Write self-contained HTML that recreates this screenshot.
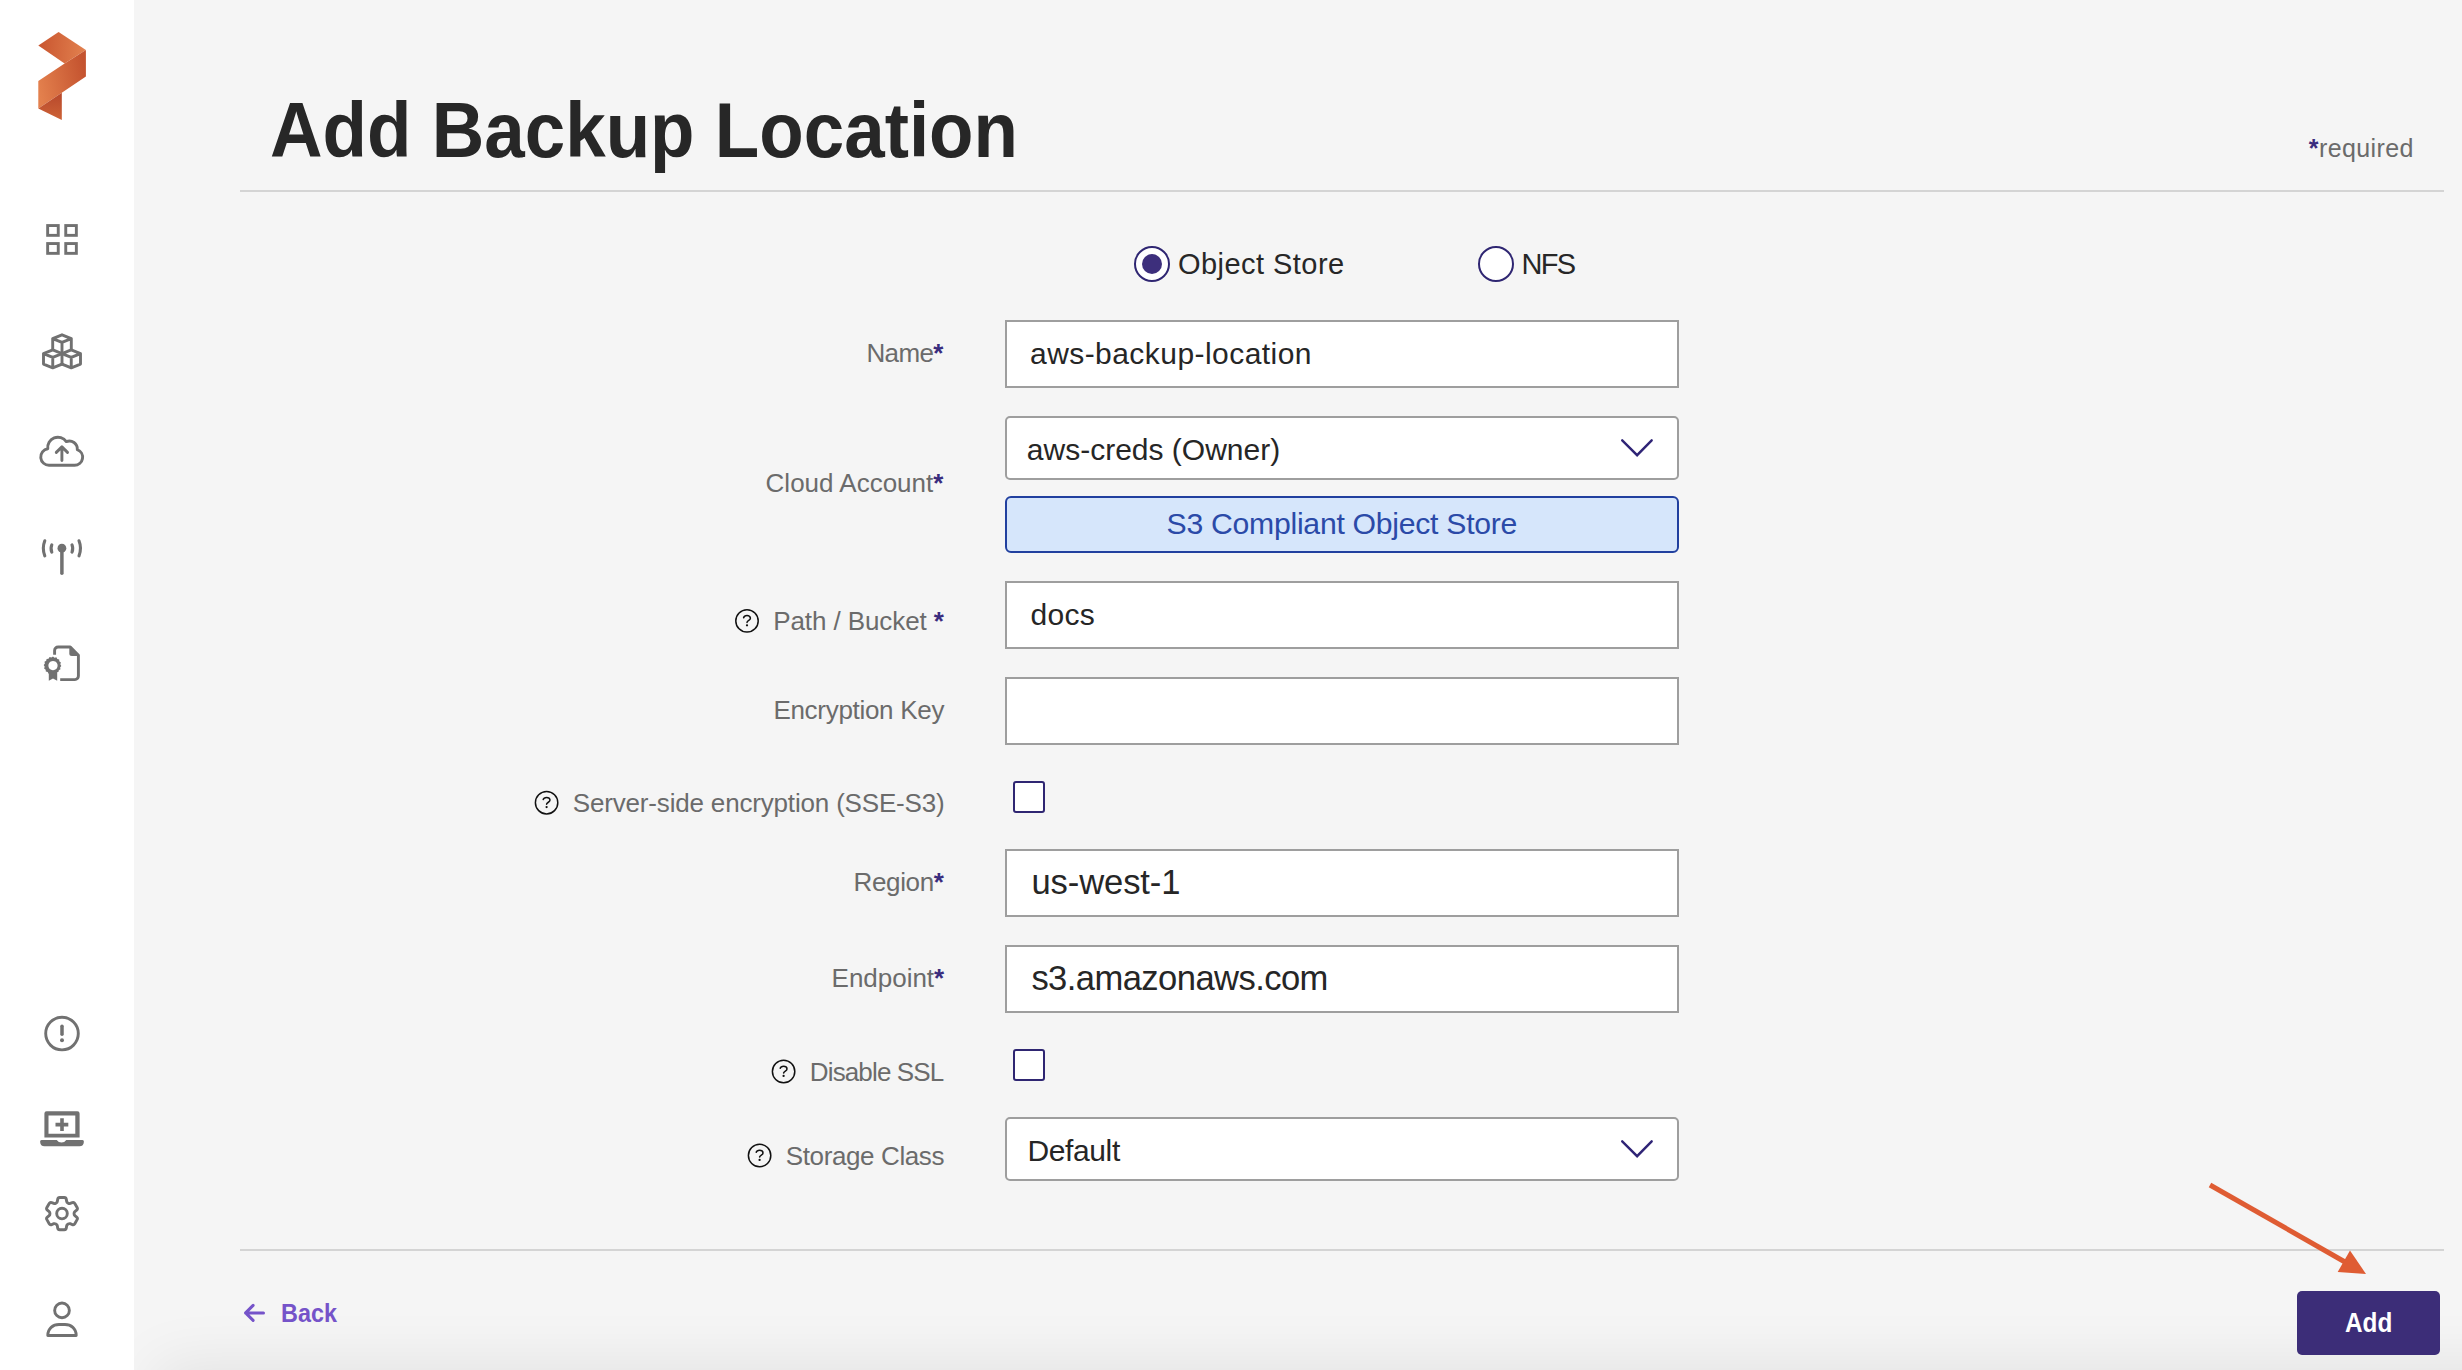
<!DOCTYPE html>
<html><head><meta charset="utf-8">
<style>
html,body{margin:0;padding:0;width:2462px;height:1370px;overflow:hidden;background:#f5f5f5;font-family:"Liberation Sans",sans-serif;}
.t{position:absolute;white-space:nowrap;}
.a{color:#3a2c7e;font-weight:700;}
.abs{position:absolute;box-sizing:border-box;}
#side{left:0;top:0;width:134px;height:1370px;background:#fff;}
.hr{position:absolute;left:240px;width:2204px;height:2px;background:#d4d4d4;}
.inp{position:absolute;left:1005px;width:674px;height:68px;background:#fff;border:2px solid #9e9e9e;box-sizing:border-box;}
.sel{position:absolute;left:1005px;width:674px;height:64px;background:#fff;border:2px solid #9e9e9e;border-radius:5px;box-sizing:border-box;}
.cb{position:absolute;left:1013px;width:32px;height:32px;background:#fff;border:2px solid #2f2672;border-radius:3px;box-sizing:border-box;}
svg{position:absolute;overflow:visible;}
</style></head><body>
<div class="abs" style="left:170px;top:1378px;width:2400px;height:60px;background:#ddd;box-shadow:0 0 60px 14px rgba(0,0,0,0.08)"></div>
<div id="side" class="abs"></div>
<!-- logo -->
<svg style="left:0;top:0" width="134" height="134" viewBox="0 0 134 134">
<defs>
<linearGradient id="g1" x1="38" y1="46" x2="86" y2="50" gradientUnits="userSpaceOnUse"><stop offset="0" stop-color="#c9552f"/><stop offset="1" stop-color="#e2814f"/></linearGradient>
<linearGradient id="g2" x1="38" y1="85" x2="86" y2="75" gradientUnits="userSpaceOnUse"><stop offset="0" stop-color="#e3804d"/><stop offset="1" stop-color="#c4532f"/></linearGradient>
<linearGradient id="g3" x1="50" y1="95" x2="50" y2="120" gradientUnits="userSpaceOnUse"><stop offset="0" stop-color="#b94a2c"/><stop offset="1" stop-color="#cd6337"/></linearGradient>
</defs>
<path d="M58.6 32 L85.9 50.1 L64.6 63.4 L38.3 45.5 Z" fill="url(#g1)"/>
<path d="M85.9 50.1 L85.9 76.6 L61.8 92.7 L38.3 108.4 L38.3 81 L64.6 63.4 Z" fill="url(#g2)"/>
<path d="M38.3 108.4 L61.8 92.7 L61.8 120 Z" fill="url(#g3)"/>
</svg>
<!-- sidebar icons -->
<svg style="left:0;top:0" width="134" height="1370" viewBox="0 0 134 1370" fill="none" stroke="#717171" stroke-width="2.9" stroke-linecap="round" stroke-linejoin="round">
<!-- grid -->
<g stroke-linecap="butt" stroke-linejoin="miter">
<rect x="47.65" y="225.55" width="10.6" height="9.8"/>
<rect x="65.75" y="225.55" width="10.6" height="9.8"/>
<rect x="47.65" y="243.55" width="10.6" height="9.8"/>
<rect x="65.75" y="243.55" width="10.6" height="9.8"/>
</g>
<!-- cubes -->
<path d="M62 334.8 L52.7 338.6 L62 342.4 L71.3 338.6 Z M52.7 338.6 V349.8 M71.3 338.6 V349.8 M62 342.4 V364.1"/>
<path d="M52.75 349.8 L43.5 353.6 L52.75 357.4 L62 353.6 Z M43.5 353.6 V364.1 L52.75 367.9 L62 364.1 M52.75 357.4 V367.9"/>
<path d="M71.25 349.8 L62 353.6 L71.25 357.4 L80.5 353.6 Z M80.5 353.6 V364.1 L71.25 367.9 L62 364.1 M71.25 357.4 V367.9"/>
<!-- cloud upload -->
<path d="M49.4 465.3 A8.3 8.3 0 0 1 47.8 448.8 A10.2 10.2 0 0 1 66.3 441.6 A8 8 0 0 1 77.3 449.6 A8.1 8.1 0 0 1 74.5 465.3 Z"/>
<path d="M61.9 460.6 V447.2 M56.3 452.4 L61.9 446.9 L67.5 452.4"/>
<!-- antenna -->
<g stroke-width="3.1">
<path d="M44.8 540.8 Q41.8 548.4 44.8 555.8 M51.8 544.9 Q50.2 548.5 51.8 552.1 M79 540.8 Q82 548.4 79 555.8 M72 544.9 Q73.6 548.5 72 552.1"/>
<path d="M61.9 550 V573.2" stroke-width="3.5"/>
</g>
<circle cx="61.9" cy="548.2" r="4.4" fill="#717171" stroke="none"/>
<!-- certificate doc -->
<path d="M54.6 654.8 V650.5 A3.5 3.5 0 0 1 58.1 647 H70.3 L78.4 655.2 V676.1 A3.5 3.5 0 0 1 74.9 679.6 H60.2" stroke-linecap="butt"/>
<path d="M69.3 646.2 L79.2 655.9 H71.8 A2.5 2.5 0 0 1 69.3 653.4 Z" fill="#717171" stroke="none"/>
<path d="M53 656.6 L54.5 657.8 L56.4 657.3 L57.3 659 L59.2 659.4 L59.3 661.3 L60.9 662.4 L60.3 664.2 L61.3 665.9 L60.1 667.4 L60.5 669.3 L58.8 670.2 L58.4 672.1 L56.5 672.3 L55.4 673.9 L53.6 673.4 L52 674.4 L50.5 673.2 L48.6 673.7 L47.7 672 L45.8 671.6 L45.7 669.7 L44.1 668.6 L44.7 666.8 L43.7 665.1 L44.9 663.6 L44.5 661.7 L46.2 660.8 L46.6 658.9 L48.5 658.7 L49.6 657.1 L51.4 657.6 Z M53 661 A4.6 4.6 0 1 0 53.001 661 Z" fill="#717171" stroke="none" fill-rule="evenodd"/>
<path d="M48.8 671 V680.8 L53 678.6 L57.2 680.8 V671 Z" fill="#717171" stroke="none"/>
<!-- alert -->
<circle cx="62" cy="1033.6" r="16.3"/>
<path d="M62 1026.3 V1034.2" stroke-width="3.5"/>
<circle cx="62" cy="1040.2" r="2.0" fill="#717171" stroke="none"/>
<!-- laptop -->
<path d="M44.4 1137.6 V1113.4 Q44.4 1111.2 46.6 1111.2 H77.4 Q79.6 1111.2 79.6 1113.4 V1137.6 Z M48.5 1115.5 V1133.7 H75.3 V1115.5 Z" fill="#717171" stroke="none" fill-rule="evenodd"/>
<path d="M60.2 1118.2 H63.8 V1122.7 H68.3 V1126.6 H63.8 V1130.9 H60.2 V1126.6 H55.5 V1122.7 H60.2 Z" fill="#717171" stroke="none"/>
<path d="M41.5 1140.1 H56.7 Q58.5 1142.6 61.5 1142.6 Q64.5 1142.6 66.3 1140.1 H82.5 A1.5 1.5 0 0 1 83.9 1141.7 Q83.6 1146.2 79.5 1146.2 H44.5 Q40.4 1146.2 40.1 1141.7 A1.5 1.5 0 0 1 41.5 1140.1 Z" fill="#717171" stroke="none"/>
<!-- gear -->
<g transform="translate(62,1213.6) scale(1.79) translate(-12,-12)" stroke-width="1.62">
<path d="M9.594 3.94c.09-.542.56-.94 1.11-.94h2.593c.55 0 1.02.398 1.11.94l.213 1.281c.063.374.313.686.645.87.074.04.147.083.22.127.325.196.72.257 1.075.124l1.217-.456a1.125 1.125 0 0 1 1.37.49l1.296 2.247a1.125 1.125 0 0 1-.26 1.431l-1.003.827c-.293.241-.438.613-.43.992a7.723 7.723 0 0 1 0 .255c-.008.378.137.75.43.991l1.004.827c.424.35.534.955.26 1.43l-1.298 2.247a1.125 1.125 0 0 1-1.369.491l-1.217-.456c-.355-.133-.75-.072-1.076.124a6.47 6.47 0 0 1-.22.128c-.331.183-.581.495-.644.869l-.213 1.281c-.09.543-.56.94-1.11.94h-2.594c-.55 0-1.019-.398-1.11-.94l-.213-1.281c-.062-.374-.312-.686-.644-.87a6.520 6.520 0 0 1-.22-.127c-.325-.196-.72-.257-1.076-.124l-1.217.456a1.125 1.125 0 0 1-1.369-.49l-1.297-2.247a1.125 1.125 0 0 1 .26-1.431l1.004-.827c.292-.24.437-.613.43-.991a6.932 6.932 0 0 1 0-.255c.007-.38-.138-.751-.43-.992l-1.004-.827a1.125 1.125 0 0 1-.26-1.43l1.297-2.247a1.125 1.125 0 0 1 1.37-.491l1.216.456c.356.133.751.072 1.076-.124.072-.044.146-.086.22-.128.332-.183.582-.495.644-.869l.214-1.28Z"/>
<circle cx="12" cy="12" r="2.96"/>
</g>
<!-- person -->
<circle cx="62" cy="1310.4" r="7.35"/>
<path d="M47.8 1335.5 C47.8 1328.5 53 1324.5 59 1324.5 H65 C71 1324.5 76.2 1328.5 76.2 1335.5 Z"/>
</svg>
<!-- header line -->
<div class="hr" style="top:190px"></div>
<div class="hr" style="top:1249px"></div>
<!-- radios -->
<div class="abs" style="left:1134px;top:246px;width:36px;height:36px;border:2px solid #2f2672;border-radius:50%;background:#fff"></div>
<div class="abs" style="left:1142px;top:254px;width:20px;height:20px;border-radius:50%;background:#3d2f7c"></div>
<div class="abs" style="left:1478px;top:246px;width:36px;height:36px;border:2px solid #2f2672;border-radius:50%;background:#fff"></div>
<!-- inputs -->
<div class="inp" style="top:320px"></div>
<div class="sel" style="top:416px"></div>
<div class="abs" style="left:1005px;top:496px;width:674px;height:57px;background:#d6e6fb;border:2px solid #21409f;border-radius:6px"></div>
<div class="inp" style="top:581px"></div>
<div class="inp" style="top:677px"></div>
<div class="cb" style="top:781px"></div>
<div class="inp" style="top:849px"></div>
<div class="inp" style="top:945px"></div>
<div class="cb" style="top:1049px"></div>
<div class="sel" style="top:1117px"></div>
<!-- chevrons -->
<svg style="left:0;top:0" width="2462" height="1370" fill="none" stroke="#2f2476" stroke-width="2.4" stroke-linecap="round">
<path d="M1622.2 440.3 L1637.1 455.2 L1651.7 440.3"/>
<path d="M1622.2 1141.3 L1637.1 1156.2 L1651.7 1141.3"/>
</svg>
<!-- help icons -->
<svg style="left:0;top:0" width="2462" height="1370" fill="none" stroke="#111" stroke-width="1.5" stroke-linecap="round">
<g transform="translate(747,620.9)"><circle r="11.2"/><path d="M-3.4 -3.2 C-3 -4.6 -1.6 -5.3 0 -5.3 C2 -5.3 3.4 -4.2 3.4 -2.6 C3.4 -0.4 0.4 -0.6 0 1.5"/><circle cy="4.4" r="1.15" fill="#111" stroke="none"/></g>
<g transform="translate(546.6,802.7)"><circle r="11.2"/><path d="M-3.4 -3.2 C-3 -4.6 -1.6 -5.3 0 -5.3 C2 -5.3 3.4 -4.2 3.4 -2.6 C3.4 -0.4 0.4 -0.6 0 1.5"/><circle cy="4.4" r="1.15" fill="#111" stroke="none"/></g>
<g transform="translate(783.6,1071.5)"><circle r="11.2"/><path d="M-3.4 -3.2 C-3 -4.6 -1.6 -5.3 0 -5.3 C2 -5.3 3.4 -4.2 3.4 -2.6 C3.4 -0.4 0.4 -0.6 0 1.5"/><circle cy="4.4" r="1.15" fill="#111" stroke="none"/></g>
<g transform="translate(759.6,1155.5)"><circle r="11.2"/><path d="M-3.4 -3.2 C-3 -4.6 -1.6 -5.3 0 -5.3 C2 -5.3 3.4 -4.2 3.4 -2.6 C3.4 -0.4 0.4 -0.6 0 1.5"/><circle cy="4.4" r="1.15" fill="#111" stroke="none"/></g>
</svg>
<!-- add button -->
<div class="abs" style="left:2297px;top:1291px;width:143px;height:64px;background:#3c2d78;border-radius:5px"></div>
<!-- annotation arrow -->
<svg style="left:0;top:0" width="2462" height="1370">
<line x1="2210" y1="1185" x2="2345" y2="1262" stroke="#df5c33" stroke-width="5"/>
<path d="M2366 1274 L2337.7 1272 L2350 1250.4 Z" fill="#df5c33"/>
</svg>
<!-- back arrow -->
<svg style="left:0;top:0" width="2462" height="1370" fill="none" stroke="#7553c9" stroke-width="3" stroke-linecap="round" stroke-linejoin="round">
<path d="M263.5 1312.9 L245.6 1312.9 M253.1 1305.4 L245.6 1312.9 L253.1 1320.4"/>
</svg>
<div class="t" id="title" style="left:269.54px;top:84.20px;font-size:77.60px;line-height:93px;letter-spacing:0.000px;color:#272727;font-weight:700;transform:scaleX(0.9379);transform-origin:0 0">Add Backup Location</div>
<div class="t" id="req" style="left:2308.80px;top:133.33px;font-size:25.00px;line-height:30px;letter-spacing:0.397px;color:#6b6b6b;font-weight:400"><span class=a>*</span>required</div>
<div class="t" id="obj" style="left:1178.00px;top:247.25px;font-size:29.00px;line-height:35px;letter-spacing:0.455px;color:#272727;font-weight:400">Object Store</div>
<div class="t" id="nfs" style="left:1521.60px;top:247.25px;font-size:29.00px;line-height:35px;letter-spacing:-1.700px;color:#272727;font-weight:400">NFS</div>
<div class="t" id="l_name" style="left:866.40px;top:338.29px;font-size:26.00px;line-height:31px;letter-spacing:-0.600px;color:#6b6b6b;font-weight:400">Name<span class=a>*</span></div>
<div class="t" id="l_cloud" style="left:765.60px;top:468.09px;font-size:26.00px;line-height:31px;letter-spacing:0.000px;color:#6b6b6b;font-weight:400">Cloud Account<span class=a>*</span></div>
<div class="t" id="l_path" style="left:773.20px;top:606.49px;font-size:26.00px;line-height:31px;letter-spacing:-0.087px;color:#6b6b6b;font-weight:400">Path / Bucket <span class=a>*</span></div>
<div class="t" id="l_enc" style="left:773.40px;top:695.49px;font-size:26.00px;line-height:31px;letter-spacing:-0.294px;color:#6b6b6b;font-weight:400">Encryption Key</div>
<div class="t" id="l_sse" style="left:572.80px;top:788.29px;font-size:26.00px;line-height:31px;letter-spacing:-0.174px;color:#6b6b6b;font-weight:400">Server-side encryption (SSE-S3)</div>
<div class="t" id="l_region" style="left:853.60px;top:867.49px;font-size:26.00px;line-height:31px;letter-spacing:-0.367px;color:#6b6b6b;font-weight:400">Region<span class=a>*</span></div>
<div class="t" id="l_endp" style="left:831.60px;top:963.29px;font-size:26.00px;line-height:31px;letter-spacing:-0.025px;color:#6b6b6b;font-weight:400">Endpoint<span class=a>*</span></div>
<div class="t" id="l_ssl" style="left:809.80px;top:1057.09px;font-size:26.00px;line-height:31px;letter-spacing:-0.860px;color:#6b6b6b;font-weight:400">Disable SSL</div>
<div class="t" id="l_sc" style="left:785.80px;top:1141.09px;font-size:26.00px;line-height:31px;letter-spacing:-0.385px;color:#6b6b6b;font-weight:400">Storage Class</div>
<div class="t" id="v_name" style="left:1030.00px;top:336.30px;font-size:30.00px;line-height:36px;letter-spacing:0.444px;color:#262626;font-weight:400">aws-backup-location</div>
<div class="t" id="v_cloud" style="left:1026.80px;top:432.10px;font-size:30.00px;line-height:36px;letter-spacing:0.000px;color:#262626;font-weight:400">aws-creds (Owner)</div>
<div class="t" id="v_s3" style="left:1166.60px;top:506.23px;font-size:30.20px;line-height:36px;letter-spacing:-0.275px;color:#2b4aa8;font-weight:400">S3 Compliant Object Store</div>
<div class="t" id="v_path" style="left:1030.40px;top:597.10px;font-size:30.00px;line-height:36px;letter-spacing:0.333px;color:#262626;font-weight:400">docs</div>
<div class="t" id="v_region" style="left:1031.40px;top:860.90px;font-size:34.60px;line-height:42px;letter-spacing:-0.098px;color:#262626;font-weight:400">us-west-1</div>
<div class="t" id="v_endp" style="left:1031.40px;top:957.10px;font-size:34.60px;line-height:42px;letter-spacing:-0.572px;color:#262626;font-weight:400">s3.amazonaws.com</div>
<div class="t" id="v_sc" style="left:1027.40px;top:1133.10px;font-size:30.00px;line-height:36px;letter-spacing:-0.367px;color:#262626;font-weight:400">Default</div>
<div class="t" id="back" style="left:281.34px;top:1298.29px;font-size:25.70px;line-height:31px;letter-spacing:0.000px;color:#7553c9;font-weight:700;transform:scaleX(0.9099);transform-origin:0 0">Back</div>
<div class="t" id="add" style="left:2345.26px;top:1306.97px;font-size:26.90px;line-height:32px;letter-spacing:0.000px;color:#ffffff;font-weight:700;transform:scaleX(0.9045);transform-origin:0 0">Add</div>
</body></html>
